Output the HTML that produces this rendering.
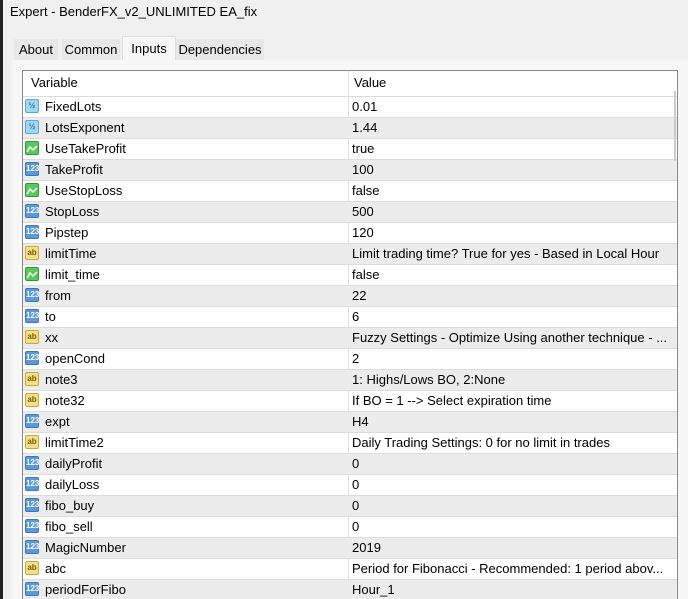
<!DOCTYPE html><html><head><style>
html,body{margin:0;width:688px;height:599px;overflow:hidden}
body{background:#f0f0f0;font-family:"Liberation Sans",sans-serif;font-size:13px;color:#000;position:relative}
.t{position:absolute;white-space:nowrap}
.tab{position:absolute;top:39px;height:21px;background:#e8e8e8;line-height:21px;text-align:center}
#panel{position:absolute;left:12px;top:60px;width:676px;height:539px;background:#f7f7f7}
#box{position:absolute;left:22px;top:70px;width:654px;height:535px;background:#fff;border:1px solid #8a8a8a;overflow:hidden}
.row{position:absolute;left:0;width:654px;height:20px;border-top:1px solid #dcdcdc;line-height:20px}
.g{background:#ececec}
.ic{position:absolute;left:2px;top:2px;width:14px;height:14px;border-radius:2px;font-size:8px;line-height:14px;text-align:center;font-weight:bold}
.n{background:#5b9ad9;color:#fff;border:1px solid #3a78b8;width:12px;height:12px;line-height:12px}
.d{background:#9fd8f0;color:#2a6fa0;border:1px solid #60a8d0;width:12px;height:12px;line-height:12px}
.s{background:#f2e08a;color:#7a5a00;border:1px solid #c9a830;width:12px;height:12px;line-height:12px}
.b{background:#5cc85c;border:1px solid #2f9a2f;width:12px;height:12px}
.nm{position:absolute;left:22px}
.vl{position:absolute;left:329px;width:320px;overflow:hidden}
</style></head><body>
<div style="position:absolute;left:0;top:0;width:3px;height:599px;background:#222"></div>
<div class="t" style="left:10px;top:4px;font-size:13px">Expert - BenderFX_v2_UNLIMITED EA_fix</div>
<div class="tab" style="left:14px;width:44px">About</div>
<div class="tab" style="left:62px;width:58px">Common</div>
<div class="tab" style="left:122px;width:52px;top:36px;height:25px;line-height:23px;background:#f7f7f7;border:1px solid #ddd;border-bottom:none">Inputs</div>
<div class="tab" style="left:176px;width:88px">Dependencies</div>
<div id="panel"></div>
<div id="box">
<div class="t" style="left:8px;top:4px">Variable</div>
<div class="t" style="left:331px;top:4px">Value</div>
<div style="position:absolute;left:325px;top:0;width:1px;height:540px;background:#e0e0e0"></div>
<div id="rows"></div>
<div style="position:absolute;left:651px;top:20px;width:2px;height:70px;background:#ccc"></div>
</div>
<script>
var R=[["d","FixedLots","0.01"],["d","LotsExponent","1.44"],["b","UseTakeProfit","true"],["n","TakeProfit","100"],["b","UseStopLoss","false"],["n","StopLoss","500"],["n","Pipstep","120"],["s","limitTime","Limit trading time? True for yes - Based in Local Hour"],["b","limit_time","false"],["n","from","22"],["n","to","6"],["s","xx","Fuzzy Settings - Optimize Using another technique - ..."],["n","openCond","2"],["s","note3","1: Highs/Lows BO, 2:None"],["s","note32","If BO = 1 --> Select expiration time"],["n","expt","H4"],["s","limitTime2","Daily Trading Settings: 0 for no limit in trades"],["n","dailyProfit","0"],["n","dailyLoss","0"],["n","fibo_buy","0"],["n","fibo_sell","0"],["n","MagicNumber","2019"],["s","abc","Period for Fibonacci - Recommended: 1 period abov..."],["n","periodForFibo","Hour_1"]];
var h="";R.forEach(function(r,i){var txt={n:"123",d:"½",s:"ab",b:""}[r[0]];
var icon=r[0]=="b"?'<div class="ic b"><svg width="12" height="12"><path d="M1 10 L4 5 L7 8 L11 4" stroke="#fff" stroke-width="1.5" fill="none"/></svg></div>':'<div class="ic '+r[0]+'">'+txt+'</div>';
h+='<div class="row'+(i%2?' g':'')+'" style="top:'+(25+21*i)+'px">'+icon+'<span class="nm">'+r[1]+'</span><span class="vl">'+r[2]+'</span></div>';});
document.getElementById("rows").innerHTML=h;
</script>
</body></html>
